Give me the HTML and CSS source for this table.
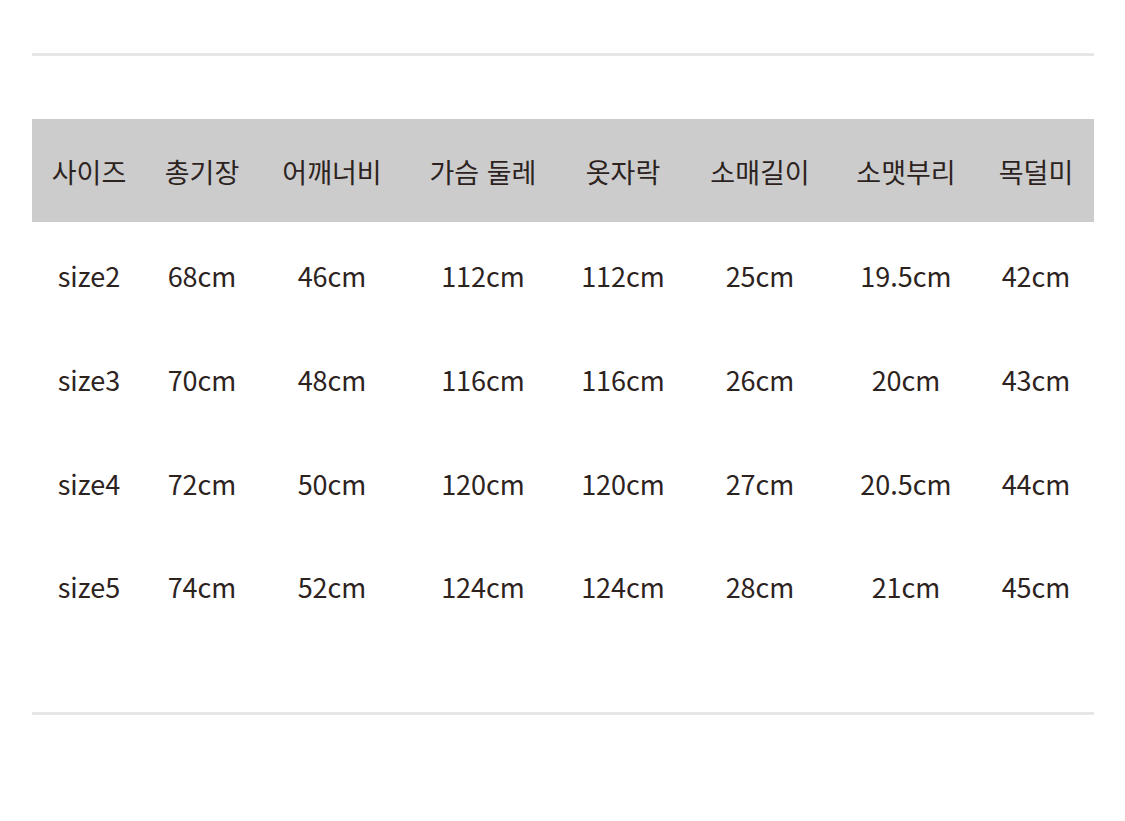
FILE: index.html
```html
<!DOCTYPE html>
<html lang="ko">
<head>
<meta charset="utf-8">
<link rel="stylesheet" href="styles.css">
</head>
<body>
<div class="page">
  <hr class="rule rule-top">
  <div class="size-table">
    <div class="row head">
      <div class="cell">사이즈</div>
      <div class="cell">총기장</div>
      <div class="cell">어깨너비</div>
      <div class="cell">가슴 둘레</div>
      <div class="cell">옷자락</div>
      <div class="cell">소매길이</div>
      <div class="cell">소맷부리</div>
      <div class="cell">목덜미</div>
    </div>
    <div class="row">
      <div class="cell">size2</div>
      <div class="cell">68cm</div>
      <div class="cell">46cm</div>
      <div class="cell">112cm</div>
      <div class="cell">112cm</div>
      <div class="cell">25cm</div>
      <div class="cell">19.5cm</div>
      <div class="cell">42cm</div>
    </div>
    <div class="row">
      <div class="cell">size3</div>
      <div class="cell">70cm</div>
      <div class="cell">48cm</div>
      <div class="cell">116cm</div>
      <div class="cell">116cm</div>
      <div class="cell">26cm</div>
      <div class="cell">20cm</div>
      <div class="cell">43cm</div>
    </div>
    <div class="row">
      <div class="cell">size4</div>
      <div class="cell">72cm</div>
      <div class="cell">50cm</div>
      <div class="cell">120cm</div>
      <div class="cell">120cm</div>
      <div class="cell">27cm</div>
      <div class="cell">20.5cm</div>
      <div class="cell">44cm</div>
    </div>
    <div class="row">
      <div class="cell">size5</div>
      <div class="cell">74cm</div>
      <div class="cell">52cm</div>
      <div class="cell">124cm</div>
      <div class="cell">124cm</div>
      <div class="cell">28cm</div>
      <div class="cell">21cm</div>
      <div class="cell">45cm</div>
    </div>
  </div>
  <hr class="rule rule-bottom">
</div>
</body>
</html>
```

FILE: styles.css
```css
html, body {
  margin: 0;
  padding: 0;
  background: #ffffff;
}

.page {
  width: 1062px;
  padding: 53px 32px 0 32px;
  font-family: "Noto Sans CJK KR", "Noto Sans", sans-serif;
  color: #2d231e;
}

.rule {
  margin: 0;
  border: 0;
  height: 3px;
  background: #e6e6e6;
}

.rule-top {
  margin-bottom: 63px;
}

.rule-bottom {
  margin-top: 75px;
}

.size-table {
  display: flex;
  flex-direction: column;
}

.row {
  display: grid;
  grid-template-columns: 114px 112px 148px 154px 126px 148px 144px 116px;
  height: 103.7px;
  align-items: center;
}

.row.head {
  background: #cccccc;
  height: 103px;
}

.cell {
  text-align: center;
  font-size: 27px;
  line-height: 1;
  padding-top: 4px;
  white-space: nowrap;
}

.row.head .cell {
  padding-top: 2px;
}
```
